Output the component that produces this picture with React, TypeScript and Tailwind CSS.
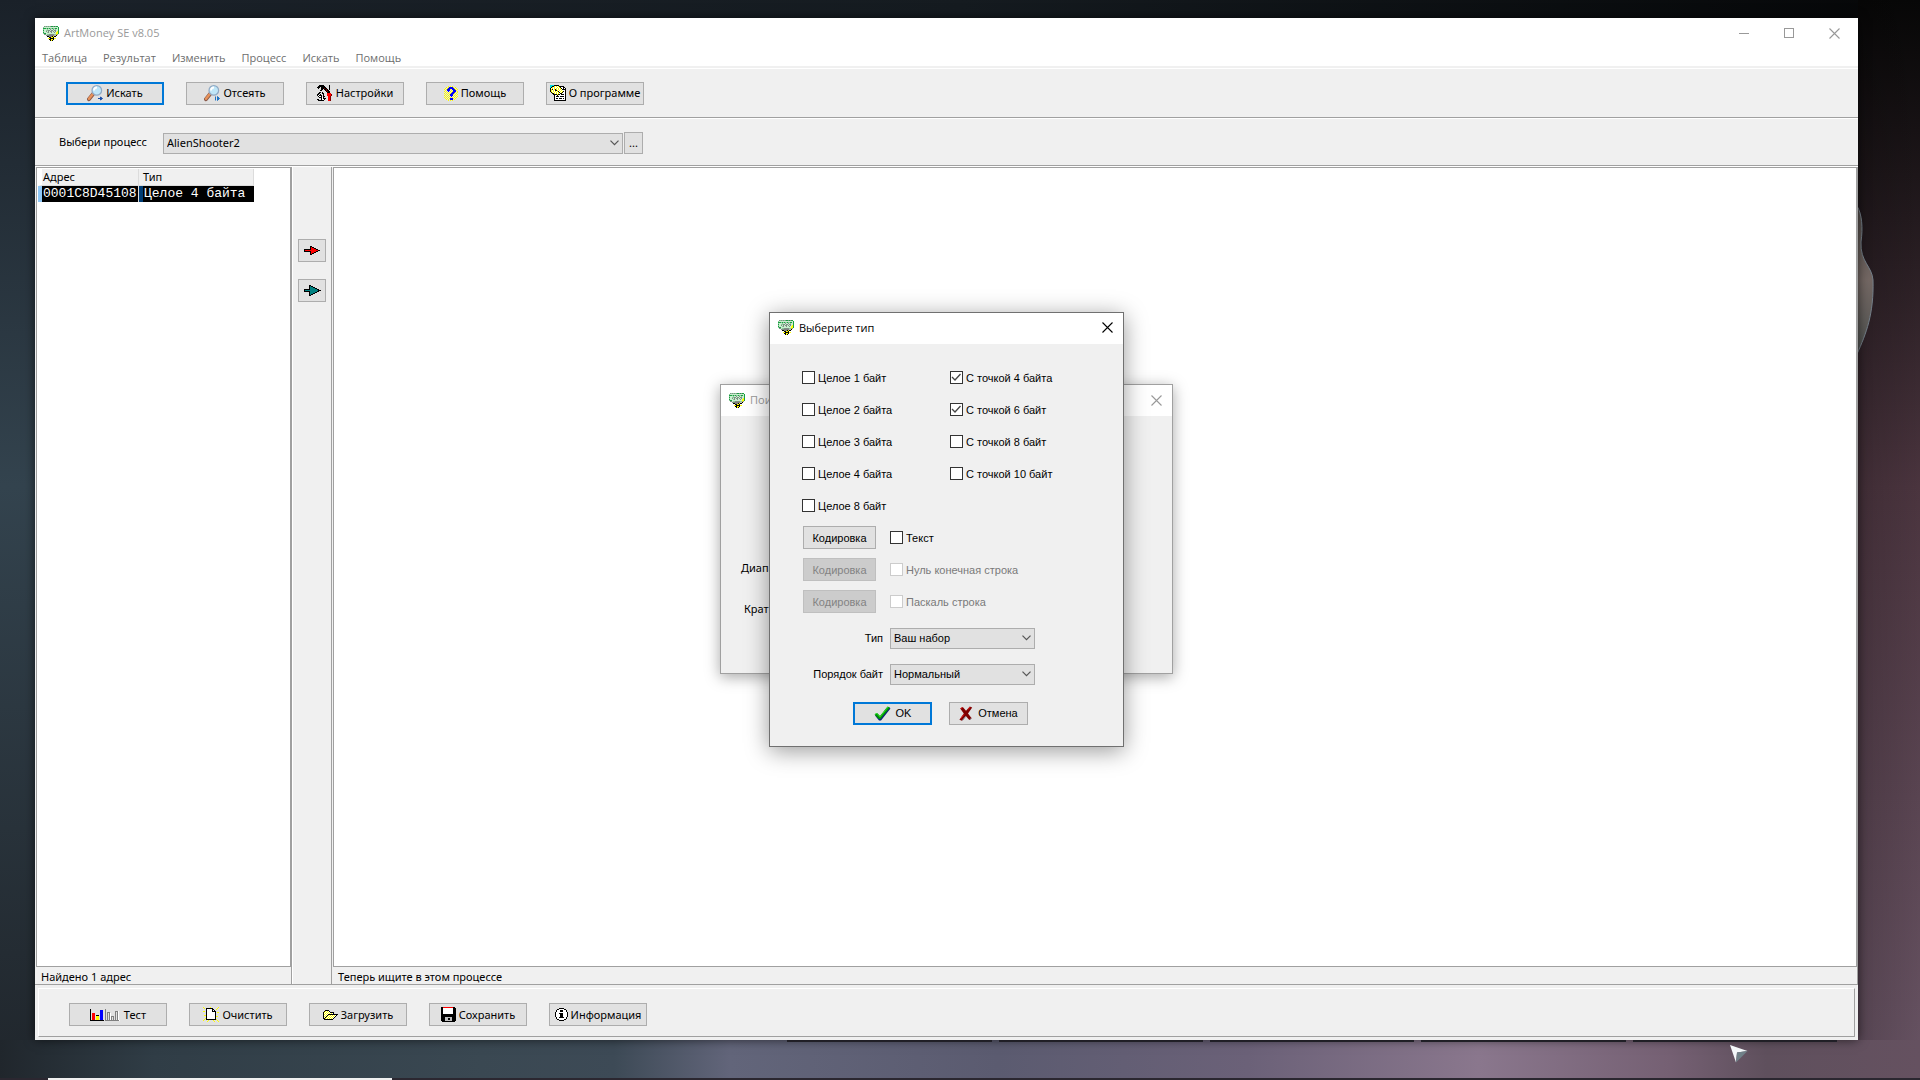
import type { ReactNode } from 'react'

const palette: Record<string, string> = {
    k: '#000000',
    w: '#ffffff',
    r: '#ff0000',
    d: '#800000',
    y: '#ffff00',
    o: '#e0d020',
    b: '#0000ff',
    t: '#008080',
    c: '#00e0e0',
    g: '#18a040',
    l: '#c9efcf',
    m: '#8cc89a',
    e: '#7f8f84',
    s: '#808080',
    v: '#c0c0c0',
}

// Every character of a row is one pixel, a dot is transparent
const PixelIcon = ({ rows }: { rows: string[] }) => (
    <svg
        width={rows[0].length}
        height={rows.length}
        viewBox={`0 0 ${rows[0].length} ${rows.length}`}
        shapeRendering="crispEdges"
        className="shrink-0"
        aria-hidden="true"
    >
        {rows.map((row, y) =>
            row.split('').map((char, x) =>
                palette[char] ? (
                    <rect key={`${x}-${y}`} x={x} y={y} width="1" height="1" fill={palette[char]} />
                ) : null
            )
        )}
    </svg>
)

const moneyIcon = [
    '.emememeggegegg.',
    'mllllllllllllllg',
    'gggmgmgmmgmmgglg',
    'mlllmllellelmllg',
    'gllmmeeleeleellg',
    'mlleleleelelelyg',
    'glllmellellelyyg',
    'mggllllllllllyyg',
    '.eelmmeeeeemmoe.',
    '...eeesssssvvk..',
    '....kkesskykk...',
    '......kkyyk.....',
    '.....yykkkkyy...',
    '......kkyyk.....',
    '.......kyk......',
]

const toolsIcon = [
    '..kkkkk.....k...',
    '.kkkkkkk....k...',
    'kkk.kkkkk...k...',
    '.k..kkkdkk..k...',
    '....kk.kkdk.k...',
    '...kk...kdkk....',
    '.........kdkk...',
    '..kk.k....kkk...',
    '.kk..kk...rrrr..',
    'kk.k..k...rrrrd.',
    'kwkkk.k...rrrrd.',
    '.kwwk.kk...rrd..',
    '..kkkwk....rrd..',
    '....kwkkk..rrd..',
    'kk..kwwk...rrd..',
    '.kkkkkk....rrd..',
]

const helpIcon = [
    '....y.y.y.....',
    '..y.ybbbby.y..',
    '.y.ybbbbbby.y.',
    'y.ybbby.bbby.y',
    '.y.bbb.y.bbby.',
    'y.y.b.y.ybbb.y',
    '.y.y.y.ybbby.y',
    'y.y.y.ybbby.y.',
    '.y.y.ybbby.y.y',
    'y.y.y.bbb.y.y.',
    '.y.y.y.b.y.y.y',
    'y.y.y.y.y.y.y.',
    '.y.y.ybbby.y..',
    '..y.y.bbb.y...',
    '....y.y.y.....',
]

const aboutIcon = [
    'cccckkkkk.......',
    'cckkywywykkkkk..',
    'ckywywwywykwwkk.',
    'kwywywywywykwkwk',
    'kykwykywywywkkkk',
    'kywywkkywywywwwk',
    'kywywywykwywykwk',
    '.kywywywykwykwwk',
    '..kkywywywkkwwwk',
    '...kkkkykkwkkkwk',
    '....kwwkwwwwwwwk',
    '....kwkkkwkkkkwk',
    '....kwwwwwwwwwwk',
    '....kwkkwkkkwkwk',
    '....kwwwwwwwwwwk',
    '....kkkkkkkkkkkk',
]

const testIcon = [
    'k..............s...............',
    'k.........bbb..s...............',
    'k.........bbb..s.........sssw..',
    'k.........bbb..s.sss.....s.sw..',
    'k.rrr.....bbb..s.s.sw....s.sw..',
    'k.rrr.....bbb..s.s.sw....s.sw..',
    'k.rrr.kkk.bbb..s.s.sw....s.sw..',
    'k.rrr.yyy.bbb..s.s.swsss.s.sw..',
    'k.rrr.yyy.bbb..s.s.sws.s.s.sw..',
    'k.rrr.yyy.bbb..s.s.sws.s.s.sw..',
    'k.rrr.yyy.bbb..s.s.sws.s.s.sw..',
    'kkkkkkkkkkkkkk.ssssssssssssssw.',
]

const newIcon = [
    'y......y.......y',
    '.y.kkkkkkk....y.',
    '...kwwwwwkk..y..',
    '...kwwwwwkwk....',
    'yy.kwwwwwkkkk...',
    '...kwwwwwwwwk.yy',
    '...kwwwwwwwwk...',
    '...kwwwwwwwwk...',
    '.yykwwwwwwwwk...',
    '...kwwwwwwwwkyy.',
    '...kwwwwwwwwk...',
    '..ykwwwwwwwwk...',
    '.y.kkkkkkkkkky..',
    'y....y....y...y.',
    '....y......y...y',
]

const folderIcon = [
    '..kkkk.........',
    '.kywywk........',
    'kywywywkkkk....',
    'kwywywywywk....',
    'kywywkkkkkkkkkk',
    'kwywkywywywywk.',
    'kywkywywywywk..',
    'kwkywywywywk...',
    'kkywywywywk....',
    '.kkkkkkkkk.....',
]

const saveIcon = [
    'kkrrrrrrrrrrkk.',
    'kkwwwwwwwwwwkkk',
    'kkwwwwwwwwwwkkk',
    'kkwwwwwwwwwwkkk',
    'kkwwwwwwwwwwkkk',
    'kkwwwwwwwwwwkkk',
    'kkwwwwwwwwwwkkk',
    'kkkkkkkkkkkkkkk',
    'kkkkkkkkkkkkkkk',
    'kkkkkkkkkkkkkkk',
    'kkkkvvvvvvvkkkk',
    'kkkkvvvkkvvkkkk',
    'kkkkvvvkkvvkkkk',
    'kkkkvvvvvvvkkkk',
    '.kkkkkkkkkkkkk.',
]

const infoIcon = [
    '....kkkkk....',
    '..kkwwwwwkk..',
    '.kwwwkkkwwwk.',
    '.kwwwkkkwwwk.',
    'kwwwwwwwwwwwk',
    'kwwwkkkkwwwwk',
    'kwwwwkkkwwwwk',
    'kwwwwkkkwwwwk',
    'kwwwwkkkwwwwk',
    '.kwwkkkkkwwk.',
    '.kwwwwwwwwwk.',
    '..kkwwwwwkk..',
    '....kkkkk....',
]

const redArrow = [
    '......kk........',
    '......krkk......',
    '......krrrkk....',
    'kkkkkkkrrrrrkk..',
    'krrrrrrrrrrrrrkk',
    'kkkkkkkrrrrrkk..',
    '......krrrkk....',
    '......krkk......',
    '......kk........',
]

const tealArrow = [
    '.....kk..........',
    '.....ktkk........',
    '.....ktttkk......',
    '.....ktttttkk....',
    'kkkkkktttttttkk..',
    'ktttttttttttttkkk',
    'kkkkkktttttttkk..',
    '.....ktttttkk....',
    '.....ktttkk......',
    '.....ktkk........',
    '.....kk..........',
]

const MagnifierIcon = ({ children }: { children: ReactNode }) => (
    <svg width="16" height="17" viewBox="0 0 16 17" className="shrink-0" aria-hidden="true">
        <path d="M6.5 8.5 1.9 14.2" stroke="#8a5a4a" strokeWidth="3.8" strokeLinecap="round" />
        <path d="M6 8.8 2 13.7" stroke="#e8925a" strokeWidth="2.4" strokeLinecap="round" />
        <circle cx="9.8" cy="5.4" r="4.8" fill="#bfe6f8" stroke="#8fa9c4" strokeWidth="1.2" />
        <path d="M7 5.5a3 3 0 0 1 3-3" stroke="#ffffff" strokeWidth="1.8" fill="none" />
        {children}
    </svg>
)

const OkIcon = () => (
    <svg width="17" height="15" viewBox="0 0 17 15" className="shrink-0" aria-hidden="true">
        <path d="M1 9.5 3.5 7.5 6 10.5 14 1 16.5 2.5 7 14.5H5Z" fill="#0b1f7a" />
        <path d="M.5 8.5 3 7l3 3L13.5.5 16 1.5 6.5 13H5Z" fill="#009a00" />
        <path d="m1 8.3 2-1 3 3.6L14 1" fill="none" stroke="#2fe02f" strokeWidth="1" />
    </svg>
)

const CancelIcon = () => (
    <svg width="14" height="15" viewBox="0 0 14 15" className="shrink-0" aria-hidden="true">
        <path d="m1.2 2.5 2.6-1.5L7 4.8 10.8.6 13.2 1.5 9 7.5l3.7 4.7-2.4 1.8L6.8 9.9 3 14.7l-2.6-1L4.8 7.5Z" fill="#800000" />
        <path d="m1.5 2.5 2-1M9 3.6 11 1M1.5 12.8 5 8.3" stroke="#e02020" strokeWidth="1" fill="none" />
        <path d="m3.5 14.3 3.3-4M11 13.5l1.3-1.2" stroke="#7c7c88" strokeWidth="1" fill="none" />
    </svg>
)

const CloseGlyph = () => (
    <svg width="11" height="11" viewBox="0 0 11 11" aria-hidden="true">
        <path d="m.5.5 10 10m0-10-10 10" stroke="currentColor" strokeWidth="1.1" fill="none" />
    </svg>
)

const Chevron = () => (
    <svg
        width="9"
        height="6"
        viewBox="0 0 9 6"
        className="pointer-events-none col-start-1 row-start-1 mr-1 justify-self-end"
        aria-hidden="true"
    >
        <path d="m.5.7 4 4 4-4" stroke="#555555" strokeWidth="1.2" fill="none" />
    </svg>
)

const toolbarButtons = [
    {
        label: 'Искать',
        primary: true,
        icon: (
            <MagnifierIcon>
                <path d="M11 13.5h4M13.5 12v3l2-1.5Z" stroke="#1d4fa8" fill="#1d4fa8" strokeWidth="1" />
            </MagnifierIcon>
        ),
    },
    {
        label: 'Отсеять',
        icon: (
            <MagnifierIcon>
                <path d="M11.5 11.5v4M13.5 11.5v4l2-2Z" stroke="#1f74c4" fill="#1f74c4" strokeWidth="1" />
            </MagnifierIcon>
        ),
    },
    { label: 'Настройки', icon: <PixelIcon rows={toolsIcon} /> },
    { label: 'Помощь', icon: <PixelIcon rows={helpIcon} /> },
    { label: 'О программе', icon: <PixelIcon rows={aboutIcon} /> },
]

const bottomButtons = [
    { label: 'Тест', icon: testIcon },
    { label: 'Очистить', icon: newIcon },
    { label: 'Загрузить', icon: folderIcon },
    { label: 'Сохранить', icon: saveIcon },
    { label: 'Информация', icon: infoIcon },
]

const integerTypes = ['Целое 1 байт', 'Целое 2 байта', 'Целое 3 байта', 'Целое 4 байта', 'Целое 8 байт']

const floatTypes = [
    { label: 'С точкой 4 байта', checked: true },
    { label: 'С точкой 6 байт', checked: true },
    { label: 'С точкой 8 байт', checked: false },
    { label: 'С точкой 10 байт', checked: false },
]

const textTypes = [
    { label: 'Текст', disabled: false },
    { label: 'Нуль конечная строка', disabled: true },
    { label: 'Паскаль строка', disabled: true },
]

const menuItems = ['Таблица', 'Результат', 'Изменить', 'Процесс', 'Искать', 'Помощь']

const PushButton = ({ icon, label, primary }: { icon: ReactNode; label: string; primary?: boolean }) => (
    <button
        type="button"
        className={`flex h-[23px] w-[98px] items-center justify-center gap-[3px] whitespace-nowrap bg-[#e1e1e1] ${primary ? 'border-2 border-[#0078d7]' : 'border border-[#adadad]'
            }`}
    >
        {icon}
        {label}
    </button>
)

const CheckBox = ({ label, checked, disabled }: { label: string; checked?: boolean; disabled?: boolean }) => (
    <label className={`flex h-8 items-center gap-[3px] whitespace-nowrap ${disabled ? 'text-[#7a7a7a]' : 'text-black'}`}>
        <span className="grid place-items-center">
            <input
                type="checkbox"
                defaultChecked={checked}
                disabled={disabled}
                className="peer col-start-1 row-start-1 size-[13px] appearance-none border border-[#333333] bg-white disabled:border-[#cccccc]"
            />
            <svg
                width="11"
                height="9"
                viewBox="0 0 11 9"
                className="pointer-events-none invisible col-start-1 row-start-1 peer-checked:visible"
                aria-hidden="true"
            >
                <path d="m1 4 3 3 5.5-6" stroke="#444444" strokeWidth="1.3" fill="none" />
            </svg>
        </span>
        {label}
    </label>
)

const ComboBox = ({ id, value }: { id: string; value: string }) => (
    <div className="grid w-full items-center">
        <select
            id={id}
            defaultValue={value}
            className="col-start-1 row-start-1 h-[21px] w-full appearance-none border border-[#adadad] bg-[#e1e1e1] px-[3px]"
        >
            <option>{value}</option>
        </select>
        <Chevron />
    </div>
)

const TitleBar = ({ title, inactive }: { title: string; inactive?: boolean }) => (
    <div
        className={`flex h-[31px] items-center bg-white pr-2.5 pb-px pl-2 font-['Open_Sans',sans-serif] text-[11px] ${inactive ? 'text-[#999999]' : 'text-black'
            }`}
    >
        <PixelIcon rows={moneyIcon} />
        <span className="ml-[5px] flex-1">{title}</span>
        <button type="button" aria-label="Закрыть">
            <CloseGlyph />
        </button>
    </div>
)

const TypeDialog = () => (
    <section
        aria-label="Выберите тип"
        className="col-start-1 row-start-1 w-[355px] border border-[#707070] bg-[#f0f0f0] font-['Liberation_Sans',sans-serif] text-[11px] shadow-[0_4px_22px_rgba(0,0,0,0.4)]"
    >
        <TitleBar title="Выберите тип" />
        <div className="pt-[18px] pr-8 pb-[21px] pl-8">
            <div className="grid grid-cols-[148px_1fr]">
                <div>
                    {integerTypes.map((label) => (
                        <CheckBox key={label} label={label} />
                    ))}
                </div>
                <div>
                    {floatTypes.map((type) => (
                        <CheckBox key={type.label} label={type.label} checked={type.checked} />
                    ))}
                </div>
            </div>
            {textTypes.map((type) => (
                <div key={type.label} className="grid grid-cols-[88px_1fr] items-center">
                    <button
                        type="button"
                        disabled={type.disabled}
                        className="ml-px h-[23px] w-[73px] border border-[#adadad] bg-[#e1e1e1] disabled:border-[#bfbfbf] disabled:bg-[#cccccc] disabled:text-[#838383]"
                    >
                        Кодировка
                    </button>
                    <CheckBox label={type.label} disabled={type.disabled} />
                </div>
            ))}
            <div className="mt-2.5 grid grid-cols-[81px_145px] items-center gap-x-[7px] gap-y-[15px]">
                <label htmlFor="kind" className="text-right">Тип</label>
                <ComboBox id="kind" value="Ваш набор" />
                <label htmlFor="order" className="whitespace-nowrap text-right">Порядок байт</label>
                <ComboBox id="order" value="Нормальный" />
            </div>
            <div className="mt-[17px] flex gap-[17px] pl-[51px]">
                <button
                    type="button"
                    className="flex h-[23px] w-[79px] items-center justify-center gap-[5px] border-2 border-[#0078d7] bg-[#e1e1e1]"
                >
                    <OkIcon />
                    OK
                </button>
                <button
                    type="button"
                    className="flex h-[23px] w-[79px] items-center justify-center gap-[5px] border border-[#adadad] bg-[#e1e1e1]"
                >
                    <CancelIcon />
                    Отмена
                </button>
            </div>
        </div>
    </section>
)

const SearchDialog = () => (
    <section
        aria-label="Поиск"
        className="col-start-1 row-start-1 h-[290px] w-[453px] border border-[#a0a0a0] bg-[#f0f0f0] text-[11px] shadow-[0_3px_14px_rgba(0,0,0,0.35)]"
    >
        <TitleBar title="Поиск" inactive />
        <div className="flex w-[50px] flex-col items-end gap-6 pt-[143px] whitespace-nowrap">
            <p className="w-[30px] leading-[17px]">Диапазон</p>
            <p className="w-[27px] leading-[17px]">Кратность</p>
        </div>
    </section>
)

const Desktop = () => (
    <div className="absolute inset-0 -z-10 bg-[#10161b]" aria-hidden="true">
        <div className="absolute inset-x-0 top-0 h-5 bg-linear-to-r from-[#1b222a] via-[#151b20] to-[#060708]" />
        <div className="absolute inset-y-0 left-0 w-9 bg-linear-to-b from-[#1a2129] via-[#33434e] via-45% to-[#20262c]" />
        <div className="absolute inset-y-0 right-0 w-[62px] bg-linear-to-b from-[#070707] via-[#4a343e] via-45% to-[#675363]" />
        <div className="absolute inset-y-0 right-0 w-[62px] bg-linear-to-l from-transparent to-black/15" />
        <div className="absolute inset-x-0 bottom-0 h-10 bg-[linear-gradient(to_right,#20262c_0%,#303d46_8%,#3a4852_25%,#3d4a56_32%,#62657a_38%,#5b5b70_52%,#6b6178_65%,#8a778d_77%,#756073_87%,#5f505d_92%,#655160_100%)]" />
        <svg width="18" height="148" viewBox="0 0 18 148" className="absolute top-[206px] right-[45px]">
            <defs>
                <linearGradient id="creature" x1="0" y1="0" x2="0" y2="1">
                    <stop offset="0" stopColor="#4f4a47" />
                    <stop offset=".5" stopColor="#736763" />
                    <stop offset="1" stopColor="#4d514f" />
                </linearGradient>
            </defs>
            <path d="M0 0C5 8 6 22 4 36C3 56 15 60 16 74C17 108 9 128 0 148Z" fill="url(#creature)" stroke="#75808a" />
        </svg>
        <div className="absolute bottom-[38px] left-[41%] flex w-[1050px] gap-[7px]">
            {[1, 2, 3, 4, 5].map((i) => (
                <div key={i} className="h-0.5 flex-1 bg-[#2c2a34]" />
            ))}
        </div>
        <div className="absolute inset-x-0 bottom-0 h-0.5 bg-[#2b2730]" />
        <div className="absolute bottom-0 left-12 h-0.5 w-[344px] bg-[#f0f0f0]" />
    </div>
)

const App = () => {
    return (
        <div className="relative isolate flex h-screen flex-col overflow-hidden pt-[18px] pr-[62px] pb-10 pl-[35px] font-['Noto_Sans',sans-serif] text-[11px] leading-4 text-black">
            <Desktop />

            <main className="relative flex min-h-0 flex-1 flex-col bg-[#f0f0f0] shadow-[0_0_10px_rgba(0,0,0,0.6)]">
                <header className="bg-white font-['Open_Sans',sans-serif]">
                    <div className="flex h-[30px] items-center pr-[18px] pl-2 text-[#999999]">
                        <PixelIcon rows={moneyIcon} />
                        <h1 className="ml-[5px] flex-1">ArtMoney SE v8.05</h1>
                        <div className="flex items-center gap-[35px]">
                            <button type="button" aria-label="Свернуть" className="flex h-[10px] w-[10px] items-center">
                                <span className="h-px w-full bg-[#999999]" />
                            </button>
                            <button type="button" aria-label="Развернуть" className="size-[10px] border border-[#999999]" />
                            <button type="button" aria-label="Закрыть">
                                <CloseGlyph />
                            </button>
                        </div>
                    </div>
                    <nav className="flex h-[18px] items-start gap-4 pt-px pl-[7px] text-[#6d6d6d]">
                        {menuItems.map((item) => (
                            <a key={item} href="#" className="leading-[18px]">
                                {item}
                            </a>
                        ))}
                    </nav>
                </header>

                <div className="mt-0.5 flex h-[50px] items-center gap-[22px] border-t border-b border-t-white border-b-[#a0a0a0] pl-[31px]">
                    {toolbarButtons.map((button) => (
                        <PushButton key={button.label} {...button} />
                    ))}
                </div>

                <div className="flex h-12 items-center border-t border-b border-t-white border-b-[#a0a0a0] pt-0.5 pl-6">
                    <label htmlFor="process" className="w-[104px] whitespace-nowrap pb-0.5">
                        Выбери процесс
                    </label>
                    <div className="w-[460px]">
                        <ComboBox id="process" value="AlienShooter2" />
                    </div>
                    <button type="button" className="ml-px h-[22px] w-[19px] border border-[#adadad] bg-[#e1e1e1]">
                        ...
                    </button>
                </div>

                <div className="flex min-h-0 flex-1 border-t border-white">
                    <section className="flex w-[257px] flex-col border-r border-[#a0a0a0] pl-px">
                        <div className="flex-1 border border-[#a0a0a0] bg-white px-px pt-px">
                            <table className="w-[216px] table-fixed border-separate border-spacing-0 text-left">
                                <thead>
                                    <tr className="h-[17px] bg-[#f0f0f0]">
                                        <th className="w-[101px] border-r border-b border-l-4 border-r-[#dcdcdc] border-b-[#dcdcdc] border-l-white p-0 pl-px leading-4 font-normal">Адрес</th>
                                        <th className="border-r border-b border-[#dcdcdc] p-0 pl-1 leading-4 font-normal">Тип</th>
                                    </tr>
                                </thead>
                                <tbody>
                                    <tr className="bg-black font-['Liberation_Mono',monospace] text-[13px] text-white">
                                        <td className="border-r border-l-4 border-r-[#dcdcdc] border-l-[#91c9f7] p-0 pl-px leading-4">0001C8D45108</td>
                                        <td className="border-l-4 border-[#003c74] p-0 pl-px leading-4 whitespace-nowrap">Целое 4 байта</td>
                                    </tr>
                                </tbody>
                            </table>
                        </div>
                        <p className="h-[17px] pl-[5px] leading-[19px]">Найдено 1 адрес</p>
                    </section>

                    <div className="flex w-10 flex-col items-center gap-[17px] border-r border-l border-r-[#a0a0a0] border-l-white pt-[72px]">
                        <button type="button" aria-label="Добавить" className="grid h-[23px] w-7 place-items-center border border-[#adadad] bg-[#e1e1e1]">
                            <PixelIcon rows={redArrow} />
                        </button>
                        <button type="button" aria-label="Добавить всё" className="grid h-[23px] w-7 place-items-center border border-[#adadad] bg-[#e1e1e1]">
                            <PixelIcon rows={tealArrow} />
                        </button>
                    </div>

                    <section className="flex flex-1 flex-col border-r border-[#a0a0a0] pl-px">
                        <div className="flex-1 border border-[#a0a0a0] bg-white" />
                        <p className="h-[17px] pl-[5px] leading-[19px]">Теперь ищите в этом процессе</p>
                    </section>
                </div>

                <footer className="border-t border-[#a0a0a0] p-[3px]">
                    <div className="flex h-[49px] items-center gap-[22px] border border-t-white border-r-[#a0a0a0] border-b-[#a0a0a0] border-l-white pt-1 pl-[30px]">
                        {bottomButtons.map((button) => (
                            <PushButton key={button.label} label={button.label} icon={<PixelIcon rows={button.icon} />} />
                        ))}
                    </div>
                </footer>

                <div className="absolute inset-0 grid place-items-center">
                    <SearchDialog />
                    <TypeDialog />
                </div>
            </main>

            <svg width="18" height="18" viewBox="0 0 18 18" className="absolute right-[172px] bottom-[17px]" aria-hidden="true">
                <path d="M0 0 17.5 6 7 7.5 6 17.5Z" fill="#f4f8fa" />
                <path d="M17.5 6 7 7.5 6 17.5Z" fill="#708088" />
            </svg>
        </div>
    )
}

export default App
